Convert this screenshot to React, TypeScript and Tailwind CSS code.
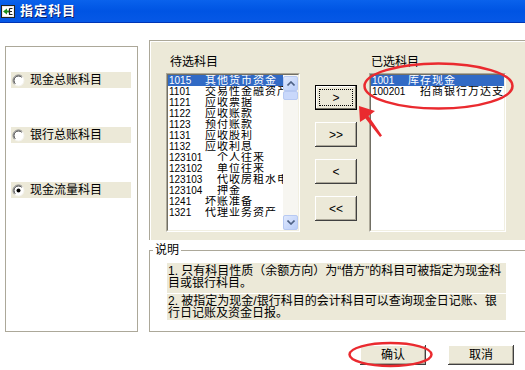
import React from "react";

type Row = { code: string; name: string; sub?: boolean; sel?: boolean };

const left: Row[] = [
  { code: "1015", name: "其他货币资金", sel: true },
  { code: "1101", name: "交易性金融资产" },
  { code: "1121", name: "应收票据" },
  { code: "1122", name: "应收账款" },
  { code: "1123", name: "预付账款" },
  { code: "1131", name: "应收股利" },
  { code: "1132", name: "应收利息" },
  { code: "123101", name: "个人往来", sub: true },
  { code: "123102", name: "单位往来", sub: true },
  { code: "123103", name: "代收房租水电", sub: true },
  { code: "123104", name: "押金", sub: true },
  { code: "1241", name: "坏账准备" },
  { code: "1321", name: "代理业务资产" },
];

const right: Row[] = [
  { code: "1001", name: "库存现金", sel: true },
  { code: "100201", name: "招商银行万达支行", sub: true },
];

const Radio = ({ checked, label }: { checked?: boolean; label: string }) => (
  <div className="flex h-[16px] w-[120px] items-center bg-[#ece9d8]">
    <svg width="13" height="13" viewBox="0 0 13 13" className="ml-[1px] shrink-0">
      <circle cx="6.5" cy="6.5" r="5.5" fill="#fff" />
      <path d="M10.4 2.6 A5.5 5.5 0 0 0 2.6 10.4" fill="none" stroke="#808080" strokeWidth="1" />
      <path d="M9.7 3.3 A4.5 4.5 0 0 0 3.3 9.7" fill="none" stroke="#404040" strokeWidth="1" />
      <path d="M2.6 10.4 A5.5 5.5 0 0 0 10.4 2.6" fill="none" stroke="#f4f3ee" strokeWidth="1" />
      {checked && <circle cx="6.5" cy="6.5" r="2" fill="#000" />}
    </svg>
    <span className="ml-[5px] leading-[16px]">{label}</span>
  </div>
);

const Btn = ({ label, def, w = "w-[42px]", h = "h-[25px]" }: { label: string; def?: boolean; w?: string; h?: string }) => (
  <div
    className={`${w} ${h} flex bg-[#ece9d8] ${
      def
        ? "border border-black p-[3px] shadow-[inset_-1px_-1px_0_#716f64,inset_1px_1px_0_#fff]"
        : "p-[3px] shadow-[inset_-1px_-1px_0_#404040,inset_1px_1px_0_#fff,inset_-2px_-2px_0_#aca899]"
    }`}
  >
    <span
      className={`flex flex-1 items-center justify-center leading-none ${
        def ? "border border-dotted border-black" : ""
      }`}
    >
      {label}
    </span>
  </div>
);

const ScrollBtn = ({ up }: { up?: boolean }) => (
  <div className="flex h-[15px] w-[15px] items-center justify-center rounded-[2px] border border-[#b7c9f2] bg-gradient-to-br from-[#dfe8fd] to-[#b9cdf8]">
    <svg width="8" height="5" viewBox="0 0 8 5">
      <path d={up ? "M0.5 4.5 L4 1 L7.5 4.5" : "M0.5 0.5 L4 4 L7.5 0.5"} fill="none" stroke="#4d6185" strokeWidth="1.6" />
    </svg>
  </div>
);

const ListBox = ({ rows, w, scroll }: { rows: Row[]; w: string; scroll?: boolean }) => (
  <div className={`${w} h-[159px] border border-b-white border-l-[#aca899] border-r-white border-t-[#aca899] bg-white`}>
    <div className="flex h-full border border-b-[#f1efe2] border-l-[#716f64] border-r-[#f1efe2] border-t-[#716f64]">
      <div className="min-w-0 flex-1 overflow-hidden">
        {rows.map((r) => (
          <div
            key={r.code}
            className={`flex h-[11px] items-center overflow-hidden whitespace-nowrap pl-[1px] ${r.sel ? "bg-[#316ac5] text-white" : ""}`}
          >
            <span className="w-[36px] shrink-0 text-[10px] leading-[11px]">{r.code}</span>
            <span className={`text-[11px] leading-[11px] tracking-[1px] ${r.sub ? "pl-[12px]" : ""}`}>{r.name}</span>
          </div>
        ))}
      </div>
      {scroll && (
        <div className="flex w-[15px] shrink-0 flex-col bg-[#f7f6f1] pt-[1px]">
          <ScrollBtn up />
          <div className="h-[9px] w-[15px] rounded-[2px] border border-[#b7c9f2] bg-[#c9d8fb]" />
          <div className="flex-1" />
          <ScrollBtn />
        </div>
      )}
    </div>
  </div>
);

export default function App() {
  return (
    <div className="relative flex h-[370px] w-[525px] flex-col overflow-hidden bg-white font-['Liberation_Sans','Noto_Sans_CJK_SC',sans-serif] text-[12px] text-black">
      {/* title bar */}
      <div className="flex h-[23px] shrink-0 items-center border-b border-[#0035b5] bg-gradient-to-b from-[#0a62ec] via-[#0054e3] to-[#0658e6] pl-[1px]">
        <svg width="14" height="13" viewBox="0 0 14 13">
          <rect x="0.5" y="0.5" width="13" height="12" fill="#e8e8e8" stroke="#222" />
          <rect x="2" y="2" width="10" height="9" fill="#fff" />
          <path d="M2 6.5 L6 3.5 L6 9.5 Z" fill="#1a8f1a" />
          <rect x="5" y="5.5" width="3" height="2" fill="#1a8f1a" />
          <path d="M8.5 3.5 H11.5 M8.5 3.5 V9.5 H11.5 M8.5 6.5 H11" stroke="#222" strokeWidth="1.2" fill="none" />
        </svg>
        <span className="ml-[5px] text-[13px] font-bold tracking-[1px] text-white [text-shadow:1px_1px_0_#0a1e6a]">
          指定科目
        </span>
      </div>

      <div className="flex flex-1">
        {/* left choices */}
        <div className="ml-[5px] mt-[23px] flex h-[286px] w-[133px] flex-col gap-[39px] border border-[#aca899] pl-[5px] pt-[25px]">
          <Radio label="现金总账科目" />
          <Radio label="银行总账科目" />
          <Radio label="现金流量科目" checked />
        </div>

        <div className="ml-[11px] mt-[17px] flex flex-1 flex-col">
          {/* selection panel */}
          <div className="flex h-[200px] border-l border-t border-[#aca899] bg-[#ece9d8] pl-[16px] pt-[14px] shadow-[inset_1px_1px_0_#fff]">
            <div className="flex flex-col">
              <div className="ml-[4px] h-[18px] leading-[14px]">待选科目</div>
              <ListBox rows={left} w="w-[134px]" scroll />
            </div>
            <div className="ml-[15px] mt-[30px] flex flex-col gap-[12px]">
              <Btn label=">" def />
              <Btn label=">>" />
              <Btn label="<" />
              <Btn label="<<" />
            </div>
            <div className="ml-[12px] flex flex-col">
              <div className="ml-[2px] h-[18px] leading-[14px]">已选科目</div>
              <ListBox rows={right} w="w-[137px]" />
            </div>
          </div>

          {/* description group */}
          <div className="mt-[10px] flex h-[82px] flex-col border-b border-l border-[#aca899]">
            <div className="-mt-[7px] flex items-center">
              <div className="w-[3px] border-t border-[#aca899]" />
              <span className="px-[2px] leading-[14px]">说明</span>
              <div className="flex-1 border-t border-[#aca899]" />
            </div>
            <div className="ml-[17px] mt-[6px] flex w-[339px] flex-col gap-[1px] leading-[12px]">
              <div className="h-[30px] bg-[#ece9d8] pl-[1px] pt-[2px]">
                1. 只有科目性质（余额方向）为“借方”的科目可被指定为现金科目或银行科目。
              </div>
              <div className="h-[26px] bg-[#ece9d8] pl-[1px] pt-[1px]">
                2. 被指定为现金/银行科目的会计科目可以查询现金日记账、银行日记账及资金日报。
              </div>
            </div>
          </div>

          {/* dialog buttons */}
          <div className="ml-[211px] mt-[13px] flex gap-[22px]">
            <Btn label="确认" w="w-[66px]" h="h-[20px]" />
            <Btn label="取消" w="w-[66px]" h="h-[20px]" />
          </div>
        </div>
      </div>

      {/* red annotations */}
      <svg className="pointer-events-none absolute left-0 top-0" width="525" height="370">
        <ellipse cx="438.5" cy="86" rx="74" ry="22.5" fill="none" stroke="#ea2a2f" strokeWidth="2.5" />
        <polygon points="359,106 375,111 368.5,116 382,135.5 380,137 365.5,118.5 360,122" fill="#ea2a2f" />
        <ellipse cx="390.5" cy="354.5" rx="41" ry="11.5" fill="none" stroke="#ea2a2f" strokeWidth="2.5" />
      </svg>
    </div>
  );
}
